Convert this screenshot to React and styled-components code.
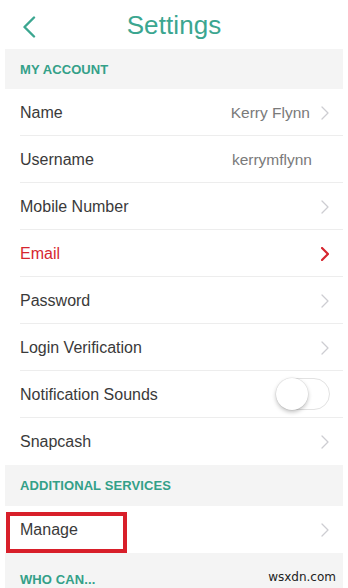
import React from "react";
import styled, { createGlobalStyle } from "styled-components";

const GlobalStyle = createGlobalStyle`
  html, body {
    margin: 0;
    padding: 0;
    background: #ffffff;
  }
  body {
    font-family: "Liberation Sans", Arial, Helvetica, sans-serif;
    -webkit-font-smoothing: antialiased;
  }
`;

const TEAL = "#3ba690";
const RED = "#d6262f";

const Page = styled.div`
  position: relative;
  width: 348px;
  height: 588px;
  overflow: hidden;
  background: #ffffff;
`;

const Header = styled.header`
  position: relative;
  height: 49px;
  display: flex;
  align-items: center;
  justify-content: center;
`;

const BackButton = styled.button`
  position: absolute;
  left: 18px;
  top: 14px;
  width: 22px;
  height: 26px;
  padding: 0;
  border: none;
  background: none;
  display: flex;
  align-items: center;
  justify-content: center;
`;

const Title = styled.h1`
  margin: 0;
  font-size: 26px;
  font-weight: 400;
  color: ${TEAL};
  letter-spacing: 0.1px;
  transform: translateY(1px);
`;

const List = styled.div`
  margin: 0 5px;
`;

const SectionHeader = styled.div`
  height: ${(p) => p.h || 40}px;
  background: #f4f4f4;
  display: flex;
  align-items: center;
  padding: ${(p) => p.pt || 0}px 0 0 15px;
  box-sizing: border-box;
  font-size: 13px;
  font-weight: 700;
  letter-spacing: 0.1px;
  color: #33a088;
`;

const Row = styled.div`
  position: relative;
  height: 47px;
  display: flex;
  align-items: center;
  padding: 0 14px 0 15px;
  box-sizing: border-box;

  &::after {
    content: "";
    display: ${(p) => (p.last ? "none" : "block")};
    position: absolute;
    left: 15px;
    right: 0;
    bottom: 0;
    height: 1px;
    background: #ededed;
  }
`;

const Label = styled.span`
  flex: 1;
  font-size: 16px;
  color: ${(p) => (p.red ? RED : "#3a3a3a")};
`;

const Value = styled.span`
  font-size: 15.5px;
  color: #7a7a7a;
  margin-right: ${(p) => (p.noChevron ? 17 : 11)}px;
`;

const Toggle = styled.div`
  width: 54px;
  height: 32px;
  border-radius: 16px;
  border: 1px solid #e2e2e2;
  background: #ffffff;
  position: relative;
  margin: -2px -1px 0 0;
  box-sizing: border-box;

  &::before {
    content: "";
    position: absolute;
    left: -1px;
    top: -1px;
    width: 32px;
    height: 32px;
    border-radius: 50%;
    background: #ffffff;
    box-shadow: 0 2px 4px rgba(0, 0, 0, 0.25), 0 0 0 0.5px rgba(0, 0, 0, 0.08);
  }
`;

const Highlight = styled.div`
  position: absolute;
  left: 1px;
  top: 6px;
  width: 121px;
  height: 41px;
  border: 4px solid #d81f2a;
  box-sizing: border-box;
  pointer-events: none;
`;

const Watermark = styled.span`
  position: absolute;
  right: 12px;
  bottom: 4px;
  font-family: "DejaVu Sans", Verdana, sans-serif;
  font-size: 12px;
  color: #222222;
`;

const Chevron = ({ red }) => (
  <svg width="8" height="14" viewBox="0 0 8 14" fill="none">
    <path
      d="M1 1 L7 7 L1 13"
      stroke={red ? RED : "#cdcdd2"}
      strokeWidth={red ? 2.2 : 1.3}
      strokeLinecap="round"
      strokeLinejoin="round"
    />
  </svg>
);

const BackIcon = () => (
  <svg width="14" height="22" viewBox="0 0 14 22" fill="none">
    <path
      d="M12 1.5 L2.5 11 L12 20.5"
      stroke={TEAL}
      strokeWidth="2.4"
      strokeLinecap="round"
      strokeLinejoin="round"
    />
  </svg>
);

const account = [
  { label: "Name", value: "Kerry Flynn", chevron: true },
  { label: "Username", value: "kerrymflynn" },
  { label: "Mobile Number", chevron: true },
  { label: "Email", chevron: true, red: true },
  { label: "Password", chevron: true },
  { label: "Login Verification", chevron: true },
  { label: "Notification Sounds", toggle: true },
  { label: "Snapcash", chevron: true, last: true },
];

export default function App() {
  return (
    <Page>
      <GlobalStyle />
      <Header>
        <BackButton aria-label="Back">
          <BackIcon />
        </BackButton>
        <Title>Settings</Title>
      </Header>
      <List>
        <SectionHeader>MY ACCOUNT</SectionHeader>
        {account.map((item) => (
          <Row key={item.label} last={item.last}>
            <Label red={item.red}>{item.label}</Label>
            {item.value && (
              <Value noChevron={!item.chevron}>{item.value}</Value>
            )}
            {item.chevron && <Chevron red={item.red} />}
            {item.toggle && <Toggle />}
          </Row>
        ))}
        <SectionHeader h={41}>ADDITIONAL SERVICES</SectionHeader>
        <Row last>
          <Label>Manage</Label>
          <Chevron />
          <Highlight />
        </Row>
        <SectionHeader h={40} pt={12}>WHO CAN...</SectionHeader>
      </List>
      <Watermark>wsxdn.com</Watermark>
    </Page>
  );
}
